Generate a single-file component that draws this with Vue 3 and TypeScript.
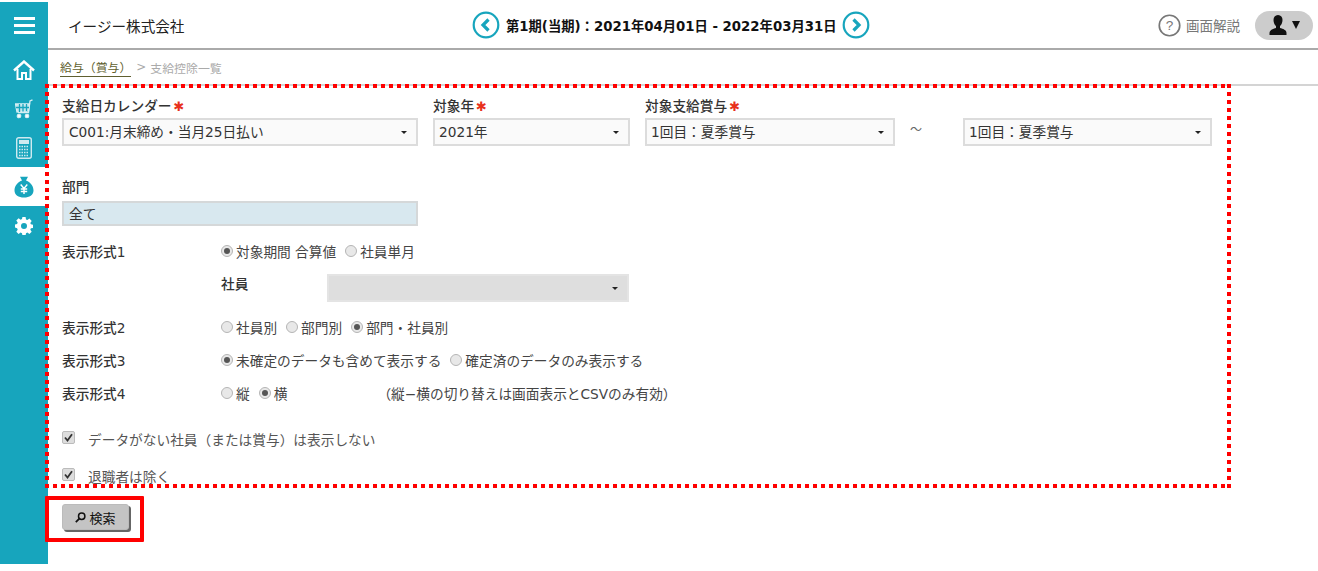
<script setup lang="ts">
const radios1 = [
  { label: '対象期間 合算値', on: true },
  { label: '社員単月', on: false },
]
const radios2 = [
  { label: '社員別', on: false },
  { label: '部門別', on: false },
  { label: '部門・社員別', on: true },
]
const radios3 = [
  { label: '未確定のデータも含めて表示する', on: true },
  { label: '確定済のデータのみ表示する', on: false },
]
const radios4 = [
  { label: '縦', on: false },
  { label: '横', on: true },
]
</script>

<template>
  <div class="shell">
    <aside class="side">
      <div class="burger"><i></i><i></i><i></i></div>
      <div class="nav">
        <svg width="22" height="20" viewBox="0 0 22 20" fill="none" stroke="#fff" stroke-width="2.400"><path d="M1 10.500 11 1.500l10 9" /><path d="M4.500 9v10h4.500v-6h4v6h4.500V9" stroke-width="2" /></svg>
      </div>
      <div class="nav">
        <svg width="18" height="20" viewBox="0 0 18 20" fill="none" stroke="#d5eef3" stroke-width="1.300"><path d="M17.500.8 15 2l-1.500 11.500H3" /><path d="M.5 5h14l-1 7L2 13z" fill="#bfe5ec" /><path d="M4.500 5v8M8 5v7.500M11.500 5v7M1 8.500h13" stroke="#17a5bd" /><circle cx="4" cy="17" r="1.700" fill="#fff" /><circle cx="12" cy="17" r="1.700" fill="#fff" /></svg>
      </div>
      <div class="nav">
        <svg width="16" height="22" viewBox="0 0 16 22"><rect x="0.700" y="0.700" width="14.600" height="20.600" rx="2" fill="none" stroke="#cfeaf0" stroke-width="1.400" /><rect x="3" y="3" width="10" height="4" fill="#cfeaf0" /><path d="M3 9.500h10M3 12.500h10M3 15.500h10M3 18.500h10" stroke="#cfeaf0" stroke-width="1.500" stroke-dasharray="1.500 1" /></svg>
      </div>
      <div class="nav active">
        <svg width="20" height="22" viewBox="0 0 20 22"><path d="M6 .8h8l-2 3.600c5 2 7.500 6 7.500 10 0 4.500-4 7-9.500 7S.5 18.900.5 14.400c0-4 2.500-8 7.500-10z" fill="#17a5bd" /><path d="M6.700 8.500 10 12.500l3.300-4M6.800 13h6.400M6.800 15.500h6.400M10 12.500V18" stroke="#fff" stroke-width="1.400" fill="none" /></svg>
      </div>
      <div class="nav">
        <svg width="18" height="18" viewBox="0 0 18 18"><path fill="#fff" fill-rule="evenodd" d="M7.400 0h3.200l.4 2.400 1.400.6 2-1.400 2.300 2.300-1.400 2 .6 1.400 2.100.4v3.200l-2.100.4-.6 1.400 1.400 2-2.300 2.300-2-1.400-1.400.6-.4 2.100H7.400L7 16.200l-1.400-.6-2 1.400-2.300-2.300 1.400-2-.6-1.400L0 10.600V7.400l2.100-.4.600-1.400-1.400-2 2.300-2.300 2 1.400L7 2.100zM9 6a3 3 0 1 0 0 6 3 3 0 0 0 0-6z" /></svg>
      </div>
    </aside>

    <main class="main">
      <header class="top">
        <div class="company">イージー株式会社</div>
        <div class="period">
          <svg class="arrow" width="28" height="28" viewBox="0 0 28 28" fill="none"><circle cx="14" cy="14" r="12.300" stroke="#17a5bd" stroke-width="2.200" /><path d="M16.500 8.500 11 14l5.500 5.500" stroke="#17a5bd" stroke-width="3.200" /></svg>
          <span>第1期(当期)：2021年04月01日 - 2022年03月31日</span>
          <svg class="arrow" width="28" height="28" viewBox="0 0 28 28" fill="none"><circle cx="14" cy="14" r="12.300" stroke="#17a5bd" stroke-width="2.200" /><path d="M11.500 8.500 17 14l-5.500 5.500" stroke="#17a5bd" stroke-width="3.200" /></svg>
        </div>
        <div class="tools">
          <svg width="23" height="23" viewBox="0 0 22 22" fill="none"><circle cx="11" cy="11" r="9.800" stroke="#777" stroke-width="1.600" /><text x="11" y="15.500" text-anchor="middle" font-size="13" font-family="Liberation Sans" fill="#777">?</text></svg>
          <span class="help">画面解説</span>
          <div class="user">
            <svg width="18" height="20" viewBox="0 0 18 20"><path d="M9 0c3 0 4.500 2.200 4.500 5 0 2.600-1 4.700-2.500 6v2c3 .8 6.500 1.900 6.500 5v2H.5v-2c0-3.100 3.500-4.200 6.500-5v-2C5.500 9.700 4.500 7.600 4.500 5 4.500 2.200 6 0 9 0z" fill="#111" /></svg>
            <span class="tri"></span>
          </div>
        </div>
      </header>

      <nav class="crumbs"><a>給与（賞与）</a><span class="sep">&gt;</span><span>支給控除一覧</span></nav>

      <section class="form">
        <div class="top-fields">
          <div class="field f1">
            <label>支給日カレンダー<b>✱</b></label>
            <div class="sel first">C001:月末締め・当月25日払い<i></i></div>
          </div>
          <div class="field f2">
            <label>対象年<b>✱</b></label>
            <div class="sel">2021年<i></i></div>
          </div>
          <div class="field f3">
            <label>対象支給賞与<b>✱</b></label>
            <div class="sel">1回目：夏季賞与<i></i></div>
          </div>
          <div class="tilde">～</div>
          <div class="field f4">
            <div class="sel">1回目：夏季賞与<i></i></div>
          </div>
        </div>

        <div class="dept">
          <label>部門</label>
          <div class="all">全て</div>
        </div>

        <div class="row r1">
          <div class="rl">表示形式1</div>
          <div class="radios">
            <span v-for="r in radios1" :key="r.label" class="radio" :class="{ on: r.on }"><i></i>{{ r.label }}</span>
          </div>
        </div>
        <div class="emp">
          <div class="emp-l">社員</div>
          <div class="sel dis"><i></i></div>
        </div>
        <div class="row r2">
          <div class="rl">表示形式2</div>
          <div class="radios">
            <span v-for="r in radios2" :key="r.label" class="radio" :class="{ on: r.on }"><i></i>{{ r.label }}</span>
          </div>
        </div>
        <div class="row r3">
          <div class="rl">表示形式3</div>
          <div class="radios">
            <span v-for="r in radios3" :key="r.label" class="radio" :class="{ on: r.on }"><i></i>{{ r.label }}</span>
          </div>
        </div>
        <div class="row r3">
          <div class="rl">表示形式4</div>
          <div class="radios">
            <span v-for="r in radios4" :key="r.label" class="radio" :class="{ on: r.on }"><i></i>{{ r.label }}</span>
            <span class="note">（縦−横の切り替えは画面表示とCSVのみ有効）</span>
          </div>
        </div>

        <div class="check c1"><span class="box"><svg width="9" height="9" viewBox="0 0 9 9" fill="none"><path d="M1 4.500 3.500 7.500 8 1.200" stroke="#333" stroke-width="1.800" /></svg></span>データがない社員（または賞与）は表示しない</div>
        <div class="check c2"><span class="box"><svg width="9" height="9" viewBox="0 0 9 9" fill="none"><path d="M1 4.500 3.500 7.500 8 1.200" stroke="#333" stroke-width="1.800" /></svg></span>退職者は除く</div>

        <div class="actions">
          <button class="search" type="button">
            <svg width="11" height="11" viewBox="0 0 11 11" fill="none"><circle cx="6.700" cy="4.300" r="3.200" stroke="#111" stroke-width="1.500" /><path d="M4.300 6.700.8 10.200" stroke="#111" stroke-width="1.800" /></svg>
            検索
          </button>
        </div>
      </section>

      <div class="dots"></div>
      <div class="redbox"></div>
    </main>
  </div>
</template>

<style>
html, body { background: #fff; }
</style>

<style scoped>
.shell {
  display: flex;
  height: 562px;
  margin-top: 2px;
  font-family: "DejaVu Sans", "Noto Sans CJK JP", sans-serif;
  font-size: 13.7px;
  color: #333;
}
.side { width: 48px; flex: none; background: #17a5bd; }
.burger { height: 46px; display: flex; flex-direction: column; align-items: center; justify-content: center; gap: 4px; }
.burger i { width: 21px; height: 3px; background: #fff; display: block; }
.nav { height: 39px; display: flex; align-items: center; justify-content: center; }
.burger + .nav { margin-top: 2px; }
.nav.active { background: #fff; }

.main { flex: 1; position: relative; min-width: 0; }
.top {
  height: 46px;
  border-bottom: 2px solid #aaa;
  display: grid;
  grid-template-columns: 424px auto 1fr;
  align-items: center;
}
.company { padding-left: 20px; font-size: 14.6px; color: #222; }
.period { display: flex; align-items: center; gap: 6px; color: #111; font-size: 13.3px; font-weight: 700; }
.arrow { display: block; }
.tools { display: flex; align-items: center; justify-content: flex-end; padding-right: 5px; color: #777; font-size: 13.500px; }
.help { margin-left: 5px; margin-right: 15px; }
.user { width: 58px; height: 29px; border-radius: 14.500px; background: #ccc; display: flex; align-items: center; justify-content: center; gap: 5px; }
.tri { width: 0; height: 0; border-left: 4.500px solid transparent; border-right: 4.500px solid transparent; border-top: 8px solid #111; }

.crumbs {
  height: 34px;
  border-bottom: 2px solid #d4d4d4;
  display: flex;
  align-items: center;
  padding-left: 12px;
  font-size: 11.900px;
  color: #aaa;
}
.crumbs a { color: #5f5f30; border-bottom: 1px solid #5f5f30; padding-bottom: 1px; }
.sep { margin: 0 4px 0 5px; }

.form { padding: 11px 0 0 14px; }
.top-fields { display: flex; align-items: flex-end; }
.field label { display: block; font-weight: 500; height: 21px; line-height: 19px; }
.field label b { color: #e8301c; margin-left: 2px; font-size: 13px; line-height: 13px; font-weight: 400; }
.f1 { width: 356px; margin-right: 15px; }
.f2 { width: 197px; margin-right: 15px; }
.f3 { width: 250px; }
.tilde { width: 68px; height: 28px; box-sizing: border-box; padding-left: 15px; color: #666; line-height: 24px; font-size: 12px; }
.f4 { width: 249px; }
.sel {
  height: 28px;
  box-sizing: border-box;
  border: 2px solid #dcdcdc;
  background: #fafafa;
  padding-left: 4px;
  line-height: 24px;
  color: #333;
  position: relative;
}
.sel.first { padding-left: 5px; }
.sel i {
  position: absolute;
  right: 9px;
  top: 11px;
  border-left: 3px solid transparent;
  border-right: 3px solid transparent;
  border-top: 3px solid #222;
}
.dept { margin-top: 32px; width: 356px; }
.dept label { display: block; height: 23px; line-height: 19px; font-weight: 500; }
.all { height: 25px; box-sizing: border-box; border: 2px solid #d5d8d9; background: #d8e8ef; padding-left: 5px; line-height: 22px; }
.row { display: flex; align-items: center; }
.rl { width: 159px; flex: none; font-weight: 500; }
.r1 { margin-top: 13px; height: 24px; }
.r2 { margin-top: 13px; height: 24px; }
.r3 { margin-top: 9px; height: 24px; }
.radios { display: flex; align-items: center; gap: 9px; color: #444; }
.radio { display: inline-flex; align-items: center; white-space: nowrap; }
.radio i {
  width: 12px; height: 12px; box-sizing: border-box; border-radius: 50%;
  border: 1px solid #b5b5b5; background: #e8e8e8; margin-right: 3px; position: relative;
}
.radio.on i::after {
  content: ""; position: absolute; left: 2px; top: 2px; width: 6px; height: 6px; border-radius: 50%; background: #555;
}
.note { margin-left: 81px; }
.emp { display: flex; align-items: center; margin: 11px 0 0 159px; height: 28px; }
.emp-l { width: 106px; margin-top: -10px; font-weight: 500; }
.sel.dis { width: 302px; background: #dedede; border-color: #e4e4e4; }
.check { display: flex; align-items: center; height: 24px; color: #555; }
.c1 { margin-top: 22px; }
.c2 { margin-top: 13px; }
.box { width: 13px; height: 13px; box-sizing: border-box; border: 1px solid #bbb; border-radius: 2px; background: #ddd; margin: 0 13px 3px 0; display: flex; align-items: center; justify-content: center; }
.actions { margin-top: 16px; }
.search {
  width: 67px; height: 26px; border: 1px solid #bbb; border-radius: 3px; background: #c4c4c4;
  box-shadow: 2px 2px 0 #666; font: inherit; font-size: 13px; color: #111;
  display: flex; align-items: center; justify-content: center; gap: 3px; padding: 0;
}
.dots {
  position: absolute; left: -3px; top: 82px; width: 1186px; height: 404px;
  background:
    repeating-linear-gradient(90deg, #f00 0 4px, transparent 4px 8px) left top / 100% 4px no-repeat,
    repeating-linear-gradient(90deg, #f00 0 4px, transparent 4px 8px) left bottom / 100% 4px no-repeat,
    repeating-linear-gradient(180deg, #f00 0 4px, transparent 4px 8px) left top / 4px 100% no-repeat,
    repeating-linear-gradient(180deg, #f00 0 4px, transparent 4px 8px) right top / 4px 100% no-repeat;
}
.redbox {
  position: absolute; left: -3px; top: 494px; width: 99px; height: 46px; box-sizing: border-box;
  border: 4px solid #f00; border-radius: 1px;
}
</style>
